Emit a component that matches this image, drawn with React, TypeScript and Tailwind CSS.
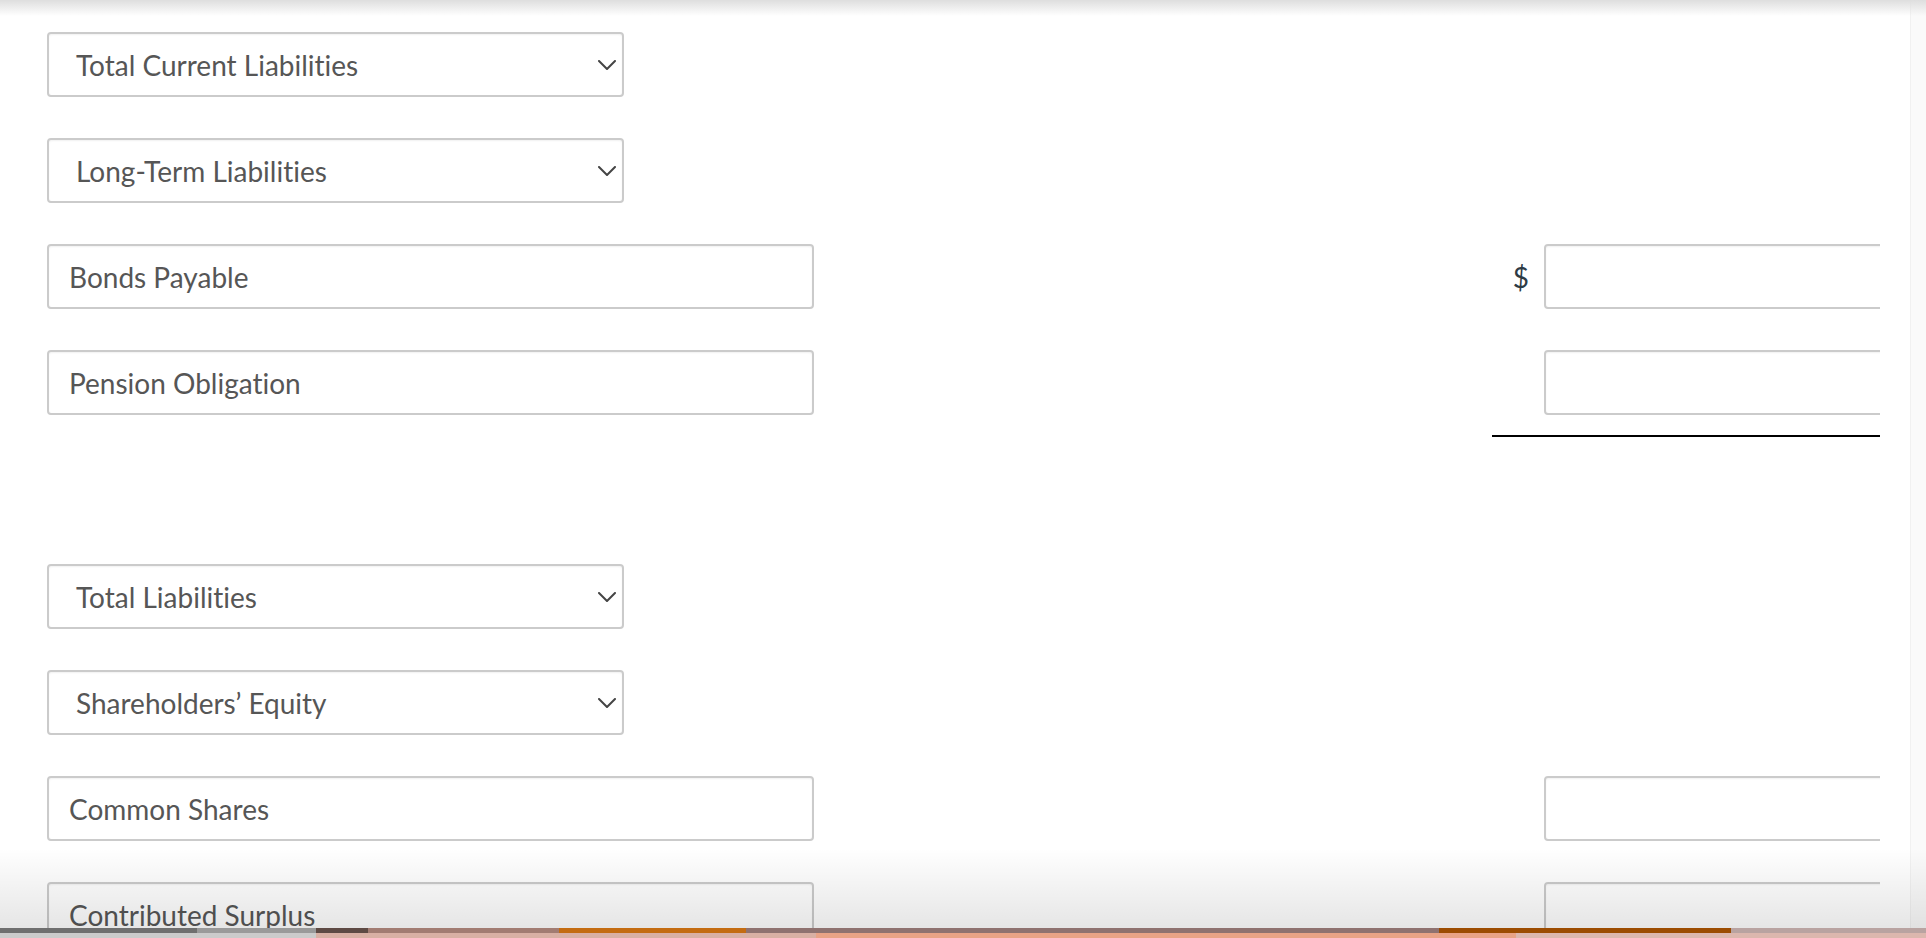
import React from "react";

type Row =
  | { kind: "select"; label: string }
  | { kind: "input"; label: string; dollar?: boolean }
  | { kind: "rule" };

const rows: Row[] = [
  { kind: "select", label: "Total Current Liabilities" },
  { kind: "select", label: "Long-Term Liabilities" },
  { kind: "input", label: "Bonds Payable", dollar: true },
  { kind: "input", label: "Pension Obligation" },
  { kind: "rule" },
  { kind: "select", label: "Total Liabilities" },
  { kind: "select", label: "Shareholders’ Equity" },
  { kind: "input", label: "Common Shares" },
  { kind: "input", label: "Contributed Surplus" },
];

const boxBase =
  "h-[65px] shrink-0 rounded-[4px] border-2 border-[#cbcbcb] bg-white shadow-[inset_0_1px_2px_rgba(0,0,0,0.06)]";

const labelText = "text-[28px] text-[#565656] [font-variant-ligatures:none]";

function Chevron() {
  return (
    <svg width="18" height="10" viewBox="0 0 18 10" fill="none" className="shrink-0">
      <path d="M1 1l8 8 8-8" stroke="#444" strokeWidth="2" strokeLinecap="round" strokeLinejoin="round" />
    </svg>
  );
}

function SelectBox({ label }: { label: string }) {
  return (
    <div className={`${boxBase} flex w-[577px] items-center justify-between pl-[27px] pr-[6px]`}>
      <span className={labelText}>{label}</span>
      <Chevron />
    </div>
  );
}

function TextBox({ label }: { label: string }) {
  return (
    <input
      readOnly
      defaultValue={label}
      className={`${boxBase} ${labelText} w-[767px] pl-[20px] outline-none`}
    />
  );
}

function AmountCell({ dollar }: { dollar?: boolean }) {
  return (
    <div className="ml-auto flex w-[388px] shrink-0 items-center overflow-hidden">
      <span className="w-[52px] shrink-0 pr-[15px] text-right text-[28px] text-[#2d3b45]">
        {dollar ? "$" : ""}
      </span>
      <div className={`${boxBase} w-[420px]`} />
    </div>
  );
}

export default function App() {
  return (
    <div
      className="relative flex h-[938px] w-[1926px] overflow-hidden bg-white"
      style={{ fontFamily: "Lato, 'Noto Sans', sans-serif" }}
    >
      <main className="w-[1910px] shrink-0">
        <div className="flex w-[1880px] flex-col overflow-hidden pl-[47px] pt-[32px]">
          {rows.map((r, i) => {
            if (r.kind === "rule") {
              return (
                <div key={i} className="mt-[20px] flex">
                  <div className="ml-auto h-[2px] w-[388px] bg-black" />
                </div>
              );
            }
            const prev = rows[i - 1];
            const mt = i === 0 ? "" : prev?.kind === "rule" ? "mt-[127px]" : "mt-[41px]";
            return (
              <div key={i} className={`flex items-center ${mt}`}>
                {r.kind === "select" ? <SelectBox label={r.label} /> : <TextBox label={r.label} />}
                {r.kind === "input" && <AmountCell dollar={r.dollar} />}
              </div>
            );
          })}
        </div>
      </main>

      {/* scrollbar track */}
      <div className="w-[16px] shrink-0 border-l border-[#f1f1f1] bg-[#fafafa]" />

      {/* header shadow */}
      <div className="pointer-events-none absolute inset-x-0 top-0 h-[16px] bg-gradient-to-b from-[#dedede] to-transparent" />

      {/* footer shade */}
      <div className="pointer-events-none absolute inset-x-0 bottom-[10px] h-[80px] bg-gradient-to-b from-transparent to-black/10" />

      {/* window edge below the page */}
      <div className="pointer-events-none absolute inset-x-0 bottom-0 flex h-[10px] flex-col">
        <div className="flex h-[5px]">
          <div className="w-[197px] bg-[#6f6f6f]" />
          <div className="w-[119px] bg-[#9a9a9a]" />
          <div className="w-[52px] bg-[#5e4a44]" />
          <div className="w-[191px] bg-[#a27c72]" />
          <div className="w-[187px] bg-[#c46c12]" />
          <div className="w-[693px] bg-[#8f7270]" />
          <div className="w-[292px] bg-[#9c4c02]" />
          <div className="flex-1 bg-[#b9a3a1]" />
        </div>
        <div className="flex h-[5px]">
          <div className="w-[316px] bg-[#cbcbcb]" />
          <div className="w-[500px] bg-[#d9b0a4]" />
          <div className="w-[700px] bg-[#e9a386]" />
          <div className="flex-1 bg-[#dcb7ae]" />
        </div>
      </div>
    </div>
  );
}
